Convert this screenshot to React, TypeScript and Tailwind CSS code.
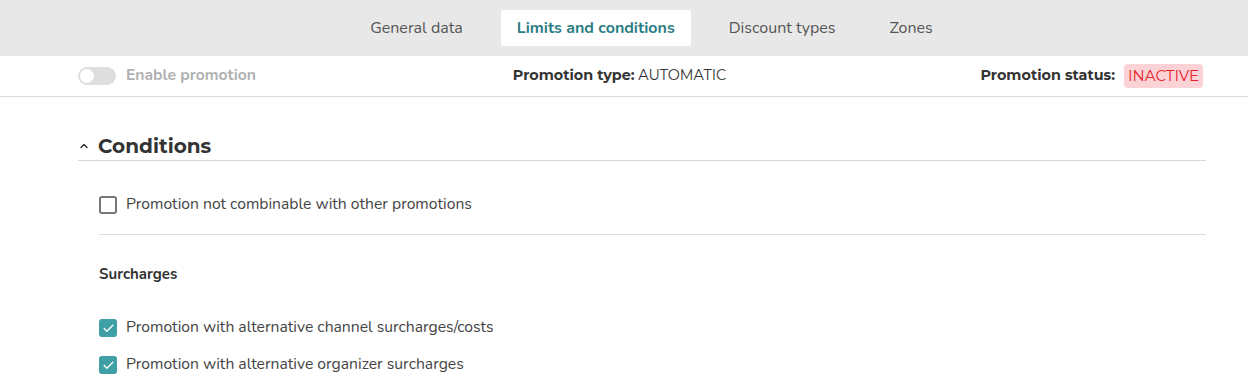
import { Check, ChevronUp } from 'lucide-react'

const body = { fontFamily: 'Nunito, Lato, "Noto Sans", sans-serif' }
const head = { fontFamily: 'Montserrat, "Open Sans", "Noto Sans", sans-serif' }

function Box({ checked, label }: { checked?: boolean; label: string }) {
  return (
    <label className="flex h-[24px] items-center gap-[9px] text-[15.7px] text-[#444]">
      {checked ? (
        <span className="flex h-[18px] w-[18px] items-center justify-center rounded-[3px] bg-[#3e9fa4]">
          <Check className="h-[13px] w-[13px] text-white" strokeWidth={2.5} />
        </span>
      ) : (
        <span className="h-[18px] w-[18px] rounded-[3px] border-2 border-[#777] bg-white" />
      )}
      {label}
    </label>
  )
}

export default function App() {
  const tabs = ['General data', 'Limits and conditions', 'Discount types', 'Zones']
  return (
    <div className="h-[390px] w-[1248px] overflow-hidden bg-white" style={body}>
      {/* Tabs */}
      <div className="flex h-[56px] items-center justify-center bg-[#e8e8e8] pl-[55px]">
        <div className="flex items-center gap-[22px]">
          {tabs.map((t) => (
            <div
              key={t}
              className={`rounded-[3px] px-[16px] py-[6px] text-[16px] ${
                t === 'Limits and conditions' ? 'bg-white font-bold text-[#2b7d84]' : 'text-[#555]'
              }`}
            >
              {t}
            </div>
          ))}
        </div>
      </div>

      {/* Status row */}
      <div className="flex h-[41px] items-center border-b border-[#dcdcdc] pl-[78px] pr-[42px]">
        <div className="flex flex-1 items-center gap-[10px]">
          <span className="relative h-[18px] w-[38px] rounded-full bg-[#dedede]">
            <span className="absolute left-[2px] top-[2px] h-[14px] w-[14px] rounded-full bg-white" />
          </span>
          <span className="text-[15.7px] font-bold text-[#b0b0b0]">Enable promotion</span>
        </div>
        <div className="flex-1 pr-[42px] text-center text-[14.4px] text-[#333]" style={head}>
          <span className="font-bold">Promotion type:</span> AUTOMATIC
        </div>
        <div className="flex flex-1 items-center justify-end gap-[9px] pr-[3px] text-[14.4px]" style={head}>
          <span className="font-bold text-[#333]">Promotion status:</span>
          <span className="rounded-[4px] bg-[#fbd3d6] px-[4px] py-[1px] text-[15px] text-[#e8202a]">INACTIVE</span>
        </div>
      </div>

      {/* Conditions */}
      <div className="pl-[78px] pr-[42px] pt-[36px]">
        <div className="flex items-center gap-[8px] border-b border-[#d8d8d8] pb-[1px]">
          <ChevronUp className="h-[12px] w-[12px] text-[#333]" strokeWidth={3} />
          <h2 className="text-[20px] font-bold leading-[26px] text-[#333]" style={head}>
            Conditions
          </h2>
        </div>
        <div className="pl-[21px]">
          <div className="border-b border-[#dedede] pb-[17px] pt-[32px]">
            <Box label="Promotion not combinable with other promotions" />
          </div>
          <div className="pt-[27px] text-[15px] font-bold leading-[24px] text-[#333]">Surcharges</div>
          <div className="flex flex-col gap-[13px] pt-[30px]">
            <Box checked label="Promotion with alternative channel surcharges/costs" />
            <Box checked label="Promotion with alternative organizer surcharges" />
          </div>
        </div>
      </div>
    </div>
  )
}
